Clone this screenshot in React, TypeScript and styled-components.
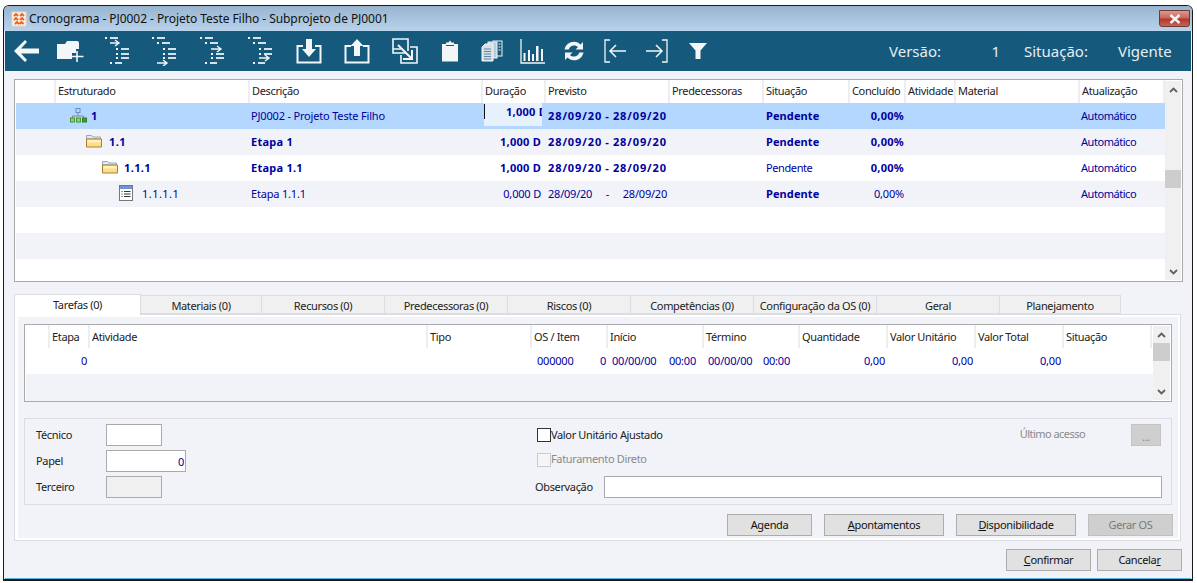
import React from "react";
import styled, { createGlobalStyle } from "styled-components";

const Global = createGlobalStyle`
  html, body { margin: 0; padding: 0; background: #fff; width: 1197px; height: 583px; overflow: hidden; }
  body { font-family: "Noto Sans", "Liberation Sans", sans-serif; font-size: 11px; color: #111; letter-spacing: -0.35px; }
  * { box-sizing: border-box; }
`;

const Win = styled.div`
  width: 1190px; height: 576px; margin: 5px 0 0 3px;
  border: 1px solid #1a1a1a; border-radius: 6px 6px 0 0;
  background: #f1f3f8; display: flex; flex-direction: column; overflow: hidden;
  border-bottom-width: 2px;
`;
const TitleBar = styled.div`
  height: 25px; flex: none; display: flex; align-items: center; padding: 0 2px 0 7px; gap: 2px;
  background: linear-gradient(#98b4cf, #b9d3ec);
`;
const TitleText = styled.span` font-size: 12px; color: #111; flex: 1; letter-spacing: -0.06px; `;
const CloseBtn = styled.div`
  width: 31px; height: 17px; border: 1px solid #6f3a36; border-radius: 0 0 3px 3px;
  background: linear-gradient(#d99a90 0, #c9685c 45%, #b3382a 55%, #c4645a 100%);
  display: flex; align-items: center; justify-content: center;
`;
const Toolbar = styled.div`
  height: 40px; flex: none; margin: 0 1px; background: #155a7c; display: flex; align-items: center; color: #e6eef3;
`;
const ToolBtn = styled.div<{ $w: number }>`
  width: ${(p) => p.$w}px; flex: none; height: 100%; display: flex; align-items: center; justify-content: center;
`;
const InfoArea = styled.div`
  margin-left: auto; display: flex; font-size: 15px; padding: 0 20px 1px 0; align-items: center; letter-spacing: 0;
`;
const Info = styled.span<{ $w: number; $right?: boolean; $pl?: number }>`
  width: ${(p) => p.$w}px; text-align: ${(p) => (p.$right ? "right" : "left")}; white-space: nowrap;
  padding-left: ${(p) => p.$pl ?? 0}px;
`;
const Content = styled.div`
  flex: 1; margin: 0 1px; padding: 8px 9px 0 9px; display: flex; flex-direction: column; border-bottom: 1px solid #5ab6dc;
`;
const GridFrame = styled.div`
  width: 1169px; height: 203px; flex: none; border: 1px solid #aaa; background: #fff; display: flex;
`;
const GridBody = styled.div` flex: 1; min-width: 0; padding-left: 1px; display: flex; flex-direction: column; overflow: hidden; `;
const mainCols = "40px 194px 233px 63px 124px 94px 86px 56px 50px 124px 85px";
const subCols = "24px 40px 338px 104px 76px 96px 96px 88px 88px 88px 88px";
const Row = styled.div<{ $cols: string; $bg?: string; $h: number }>`
  display: grid; grid-template-columns: ${(p) => p.$cols}; height: ${(p) => p.$h}px; flex: none;
  background: ${(p) => p.$bg || "#fff"}; align-items: center; padding-bottom: 2px;
`;
const HeadRow = styled(Row)` padding-bottom: 0; `;
const Head = styled.div<{ $top: number }>`
  height: 100%; border-right: 2px solid #eceef2; padding: ${(p) => p.$top}px 0 0 2px; line-height: 15px; white-space: nowrap; overflow: hidden; color: #222;
`;
const ink = "#00009e";
const Cell = styled.div<{ $bold?: boolean; $right?: boolean; $pad?: number; $ls?: number }>`
  color: ${ink}; font-weight: ${(p) => (p.$bold ? 700 : 400)}; white-space: nowrap;
  letter-spacing: ${(p) => p.$ls ?? (p.$bold ? 0.25 : -0.18)}px;
  text-align: ${(p) => (p.$right ? "right" : "left")};
  padding: ${(p) => (p.$right ? `0 ${p.$pad ?? 4}px 0 0` : `0 0 0 ${p.$pad ?? 2}px`)};
`;
const TreeCell = styled.div<{ $indent: number; $gap: number; $bold?: boolean }>`
  display: flex; align-items: center; padding-left: ${(p) => p.$indent}px; gap: ${(p) => p.$gap}px;
  color: ${ink}; font-weight: ${(p) => (p.$bold ? 700 : 400)}; letter-spacing: ${(p) => (p.$bold ? 0.4 : 0.45)}px;
`;
const EditCell = styled.div`
  position: relative; height: 23px; margin: -1px 4px 0 1px; background: #e6f1fd; color: ${ink}; font-weight: 700;
  overflow: hidden; text-align: right; line-height: 17px; letter-spacing: 0.25px;
  &::before { content: ""; position: absolute; left: 0; top: 1px; width: 1px; height: 15px; background: #111; }
`;
const EditText = styled.span` display: inline-block; margin-right: -5px; `;
const DateCell = styled.div<{ $bold?: boolean }>`
  display: flex; justify-content: space-between; padding: 0 3px 0 2px; color: ${ink};
  font-weight: ${(p) => (p.$bold ? 700 : 400)}; white-space: nowrap;
  letter-spacing: ${(p) => (p.$bold ? 0.9 : -0.22)}px;
`;
const Scroll = styled.div<{ $w: number; $top: number; $thumb: number }>`
  width: ${(p) => p.$w}px; flex: none; background: #f0f0f0; margin: 1px 1px 1px 0; position: relative; display: flex; flex-direction: column; align-items: center; justify-content: space-between; padding: 6px 0 5px;
  &::after { content: ""; position: absolute; left: 0; right: 0; top: ${(p) => p.$top}px; height: ${(p) => p.$thumb}px; background: #cdcdcd; }
`;
const Tabs = styled.div` display: flex; margin-top: 12px; height: 20px; flex: none; align-items: flex-end; `;
const Tab = styled.div<{ $w: number; $on?: boolean }>`
  width: ${(p) => p.$w}px; flex: none; height: ${(p) => (p.$on ? 21 : 19)}px; text-align: center;
  background: ${(p) => (p.$on ? "#fff" : "#f0f0f0")}; color: #222;
  border: 1px solid #dcdde0; border-bottom: ${(p) => (p.$on ? "0" : "1px solid #dcdde0")}; border-left-width: ${(p) => (p.$on ? 1 : 0)}px;
  line-height: ${(p) => (p.$on ? 19 : 20)}px; position: relative; z-index: ${(p) => (p.$on ? 1 : 0)}; margin-bottom: ${(p) => (p.$on ? -1 : 0)}px;
`;
const TabPanel = styled.div`
  width: 1167px; height: 227px; flex: none; border: 1px solid #dcdde0; box-shadow: inset 0 0 0 2px #fff, inset 2px 0 0 1px #fff, inset -2px -1px 0 0 #fff;
  padding: 9px 9px 0 9px; display: flex; flex-direction: column;
`;
const SubFrame = styled.div`
  width: 1148px; height: 78px; flex: none; border: 1px solid #aaa; background: #fff; display: flex;
`;
const SplitCell = styled.div<{ $l: number; $r: number }>`
  display: flex; justify-content: space-between; color: ${ink}; white-space: nowrap; letter-spacing: -0.2px;
  padding: 0 ${(p) => p.$r}px 0 ${(p) => p.$l}px;
`;
const Group = styled.div`
  width: 1148px; height: 87px; margin-top: 16px; border: 1px solid #dcdde0; flex: none;
  display: grid; grid-template-columns: 501px minmax(0, 1fr); padding: 5px 9px 5px 11px;
`;
const FieldStack = styled.div` display: grid; grid-template-rows: 22px 22px 22px; row-gap: 4px; `;
const FieldRow = styled.div` display: grid; grid-template-columns: 70px auto; align-items: center; `;
const Label = styled.span` color: #222; padding-bottom: 2px; `;
const Input = styled.div<{ $w: number; $off?: boolean }>`
  width: ${(p) => p.$w}px; height: 22px; border: 1px solid #aaa; background: ${(p) => (p.$off ? "#f0f0f0" : "#fff")};
  text-align: right; color: ${ink}; padding-right: 1px; line-height: 22px;
`;
const CheckRow = styled.div<{ $up?: number }>` display: flex; align-items: center; margin-top: ${(p) => -(p.$up ?? 0)}px; `;
const CheckLabel = styled.label<{ $off?: boolean }>`
  display: flex; align-items: center; color: ${(p) => (p.$off ? "#8a8a8a" : "#222")};
`;
const CheckText = styled.span` padding-bottom: 2px; `;
const Box = styled.span<{ $off?: boolean }>`
  width: 14px; height: 14px; border: 1px solid ${(p) => (p.$off ? "#ccc" : "#333")}; background: ${(p) => (p.$off ? "#f5f5f5" : "#fff")}; flex: none;
`;
const Last = styled.span` margin-left: auto; color: #8a8a8a; margin-right: 46px; padding-bottom: 3px; letter-spacing: -0.55px; `;
const Dots = styled.div`
  width: 30px; height: 22px; background: #cfcfcf; border: 1px solid #c4c4c4; color: #888; text-align: center; line-height: 24px; margin-right: 1px; margin-top: -1px;
`;
const ObsRow = styled.div` display: flex; align-items: center; gap: 11px; margin-left: -2px; `;
const ObsInput = styled.div` width: 558px; height: 22px; border: 1px solid #aaa; background: #fff; `;
const ButtonsRow = styled.div<{ $mt: number; $gap: number; $mr?: number }>`
  display: flex; justify-content: flex-end; gap: ${(p) => p.$gap}px; margin-top: ${(p) => p.$mt}px; margin-right: ${(p) => p.$mr ?? 0}px; flex: none;
`;
const Btn = styled.div<{ $w: number; $off?: boolean }>`
  width: ${(p) => p.$w}px; height: 22px; text-align: center; line-height: 20px;
  background: ${(p) => (p.$off ? "#cfcfcf" : "#e1e1e1")}; border: 1px solid ${(p) => (p.$off ? "#bfbfbf" : "#adadad")};
  color: ${(p) => (p.$off ? "#7a7a7a" : "#111")};
`;

const W = "#f2f6f8";
const Dash = "#d5e2ea";

const AppLogo = () => (
  <svg width="16" height="16" viewBox="0 0 16 16">
    <rect x="1" y="1" width="14" height="14" fill="#f7efe2" stroke="#e8d9c5" />
    <path d="M3 5l2-2 2 2M9 5l2-2 2 2M3 9l2-2 2 2M9 9l2-2 2 2M4 13l2-2 2 2M8.500 13l2-2 2 2" fill="none" stroke="#e8601a" strokeWidth="1.800" />
  </svg>
);
const CloseX = () => (
  <svg width="12" height="10" viewBox="0 0 12 10">
    <path d="M1.500 1l9 8M10.500 1l-9 8" stroke="#f5f5f5" strokeWidth="2.400" />
  </svg>
);
const BackIcon = () => (
  <svg width="27" height="24" viewBox="0 0 27 24">
    <path d="M12 1L1 12l11 11 2-2-6-6.500h18v-5H8L14 3z" fill={W} />
  </svg>
);
const FolderPlus = () => (
  <svg width="28" height="24" viewBox="0 0 28 24">
    <path d="M0 5h8l2-3h10a2 2 0 0 1 2 2v6h-3v4h-4v6H0z" fill={W} />
    <path d="M20 12v11M14.500 17.500h12" stroke={W} strokeWidth="1.600" />
  </svg>
);
const Step = ({ x, y, w }: { x: number; y: number; w: number }) => (
  <>
    <rect x={x} y={y} width="2" height="2" fill={W} />
    <rect x={x + 5} y={y} width={w} height="2" fill={Dash} />
  </>
);
const Arrow = ({ x, y, len }: { x: number; y: number; len: number }) => (
  <path d={`M${x} ${y}h${len}M${x + len - 4} ${y - 3}l4 3-4 3`} stroke={W} strokeWidth="1.400" fill="none" />
);
const TreeIcon = ({ arrow }: { arrow: 0 | 1 | 2 | 3 }) => (
  <svg width="26" height="30" viewBox="0 0 26 30">
    <Step x={0} y={1} w={8} />
    {arrow === 0 ? <Arrow x={5} y={7} len={9} /> : <Step x={5} y={6} w={8} />}
    {arrow === 2 ? <Arrow x={11} y={13} len={10} /> : <Step x={11} y={12} w={8} />}
    <Step x={11} y={17} w={8} />
    {arrow === 3 ? <Arrow x={11} y={22} len={10} /> : <Step x={11} y={21} w={8} />}
    {arrow === 1 ? <Arrow x={5} y={27} len={10} /> : <Step x={5} y={26} w={7} />}
  </svg>
);
const Tray = ({ up }: { up?: boolean }) => (
  <svg width="26" height="26" viewBox="0 0 26 26">
    <path d="M7 8H1.500v16.500h23V8H19" fill="none" stroke={W} strokeWidth="2" />
    {up ? <path d="M13 1l6.500 7H16v10h-6V8H6.500z" fill={W} /> : <path d="M10 1h6v10h4l-7 8-7-8h4z" fill={W} />}
  </svg>
);
const BoxArrow = () => (
  <svg width="26" height="26" viewBox="0 0 26 26">
    <path d="M14 15H1V1h15v12" fill="none" stroke={W} strokeWidth="1.600" />
    <path d="M9 11H1M18 9h7v16H9v-8" fill="none" stroke={W} strokeWidth="1.600" />
    <path d="M6 7l13 13M20 12v9h-9" fill="none" stroke={W} strokeWidth="2" />
  </svg>
);
const Clipboard = () => (
  <svg width="18" height="22" viewBox="0 0 18 22">
    <path d="M1 4h4V2.500h2.500L9 .5l1.500 2H13V4h4v17.500H1z" fill={W} />
    <path d="M5 5.500h8" stroke="#155a7c" strokeWidth="1" />
  </svg>
);
const Docs = () => (
  <svg width="22" height="22" viewBox="0 0 22 22">
    <rect x="12" y="1" width="9" height="15" fill="none" stroke={W} />
    <rect x="7" y="2" width="9" height="16" fill="#b9cbd6" stroke={W} />
    <path d="M1 7l3-3h8v17H1z" fill="#d6e0e6" stroke={W} />
    <path d="M3 9h7M3 11.500h7M3 14h7M3 16.500h7M3 19h7" stroke="#5d8aa2" />
    <path d="M17.500 4h2M17.500 7h2M17.500 10h2" stroke={W} />
  </svg>
);
const Chart = () => (
  <svg width="25" height="25" viewBox="0 0 25 25">
    <path d="M1 0v24h24" fill="none" stroke={W} strokeWidth="1.300" />
    <path d="M3.500 22V14h2v8zM8 22V11h2v11zM12 22V15h2v7zM16 22V7h2.500v15zM21 22V10h2v12z" fill={W} />
  </svg>
);
const Refresh = () => (
  <svg width="22" height="20" viewBox="0 0 22 20">
    <path d="M1.500 8.500C2.500 3.500 6.500.7 11 .7c3 0 5 1.300 6.500 2.800L20 1v7.500h-7.500l2.500-2.500c-1-1-2.300-1.600-4-1.600-2.400 0-4.400 1.500-5.300 4.100z" fill={W} />
    <path d="M20.500 11.500c-1 5-5 7.800-9.500 7.800-3 0-5-1.300-6.500-2.800L2 19v-7.500h7.500L7 14c1 1 2.300 1.600 4 1.600 2.400 0 4.400-1.500 5.300-4.100z" fill={W} />
  </svg>
);
const BracketLeft = () => (
  <svg width="23" height="24" viewBox="0 0 23 24">
    <path d="M6 1H1v22h5" fill="none" stroke={W} strokeWidth="1.300" />
    <path d="M22 12H6M12 6l-6 6 6 6" fill="none" stroke={W} strokeWidth="1.500" />
  </svg>
);
const BracketRight = () => (
  <svg width="23" height="24" viewBox="0 0 23 24">
    <path d="M17 1h5v22h-5" fill="none" stroke={W} strokeWidth="1.300" />
    <path d="M1 12h16M11 6l6 6-6 6" fill="none" stroke={W} strokeWidth="1.500" />
  </svg>
);
const Funnel = () => (
  <svg width="18" height="16" viewBox="0 0 18 16">
    <path d="M0 0h18l-6.500 7.500V16h-5V7.500z" fill={W} />
  </svg>
);
const Net = () => (
  <svg width="17" height="15" viewBox="0 0 17 15">
    <rect x="6" y="0.500" width="4" height="4" fill="#bcd7f5" stroke="#5d8fd1" />
    <path d="M8 5v3M2.500 10V8h11v2" fill="none" stroke="#888" />
    <rect x="0.500" y="10" width="4" height="4" fill="#8fcf7c" stroke="#3f9a35" />
    <rect x="6.500" y="10" width="4" height="4" fill="#8fcf7c" stroke="#3f9a35" />
    <rect x="12.500" y="10" width="4" height="4" fill="#3f9a35" stroke="#2f7f27" />
  </svg>
);
const Folder = () => (
  <svg width="16" height="14" viewBox="0 0 16 14">
    <path d="M.5 13V1.500h5l1.500 1.500h7.500V5H.5" fill="#dfeaf5" stroke="#9aa7b5" />
    <path d="M.5 13V5h15v8z" fill="#fddc8a" stroke="#a8842f" />
    <rect x="1.500" y="6" width="13" height="2.500" fill="#fff0c2" />
  </svg>
);
const ListIcon = () => (
  <svg width="14" height="16" viewBox="0 0 14 16">
    <rect x=".5" y=".5" width="13" height="15" fill="#fff" stroke="#777" />
    <rect x="1" y="1" width="12" height="3" fill="#6f93d6" />
    <path d="M2.500 6.500h1M2.500 9h1M2.500 11.500h1M5 6.500h6.500M5 9h6.500M5 11.500h6.500" stroke="#333" strokeWidth="1.200" />
  </svg>
);
const Up = () => (
  <svg width="9" height="6" viewBox="0 0 9 6">
    <path d="M1 5l3.500-3.500L8 5" fill="none" stroke="#606060" strokeWidth="1.800" />
  </svg>
);
const Down = () => (
  <svg width="9" height="6" viewBox="0 0 9 6">
    <path d="M1 1l3.500 3.500L8 1" fill="none" stroke="#606060" strokeWidth="1.800" />
  </svg>
);

const mainHeads = ["", "Estruturado", "Descrição", "Duração", "Previsto", "Predecessoras", "Situação", "Concluído", "Atividade", "Material", "Atualização"];
const subHeads = ["", "Etapa", "Atividade", "Tipo", "OS / Item", "Início", "Término", "Quantidade", "Valor Unitário", "Valor Total", "Situação"];
const tabs: [string, number][] = [
  ["Tarefas (0)", 127], ["Materiais (0)", 121], ["Recursos (0)", 123], ["Predecessoras (0)", 123], ["Riscos (0)", 123],
  ["Competências (0)", 123], ["Configuração da OS (0)", 123], ["Geral", 123], ["Planejamento", 121],
];
type RowData = {
  bg: string; indent: number; gap: number; icon: React.ReactNode; code: string; codeBold: boolean; desc: string; descBold: boolean;
  dur: string; durBold: boolean; edit?: boolean; dateBold: boolean; sit: string; sitBold: boolean; pct: boolean;
};
const rows: RowData[] = [
  { bg: "#b3d7ff", indent: 14, gap: 4, icon: <Net />, code: "1", codeBold: true, desc: "PJ0002 - Projeto Teste Filho", descBold: false, dur: "1,000 D", durBold: true, edit: true, dateBold: true, sit: "Pendente", sitBold: true, pct: true },
  { bg: "#f1f3f8", indent: 30, gap: 7, icon: <Folder />, code: "1.1", codeBold: true, desc: "Etapa 1", descBold: true, dur: "1,000 D", durBold: true, dateBold: true, sit: "Pendente", sitBold: true, pct: true },
  { bg: "#fff", indent: 46, gap: 6, icon: <Folder />, code: "1.1.1", codeBold: true, desc: "Etapa 1.1", descBold: true, dur: "1,000 D", durBold: true, dateBold: true, sit: "Pendente", sitBold: false, pct: true },
  { bg: "#f1f3f8", indent: 63, gap: 9, icon: <ListIcon />, code: "1.1.1.1", codeBold: false, desc: "Etapa 1.1.1", descBold: false, dur: "0,000 D", durBold: false, dateBold: false, sit: "Pendente", sitBold: true, pct: false },
];

export default function App() {
  return (
    <>
      <Global />
      <Win>
        <TitleBar>
          <AppLogo />
          <TitleText>Cronograma - PJ0002 - Projeto Teste Filho - Subprojeto de PJ0001</TitleText>
          <CloseBtn><CloseX /></CloseBtn>
        </TitleBar>
        <Toolbar>
          <ToolBtn $w={43}><BackIcon /></ToolBtn>
          <ToolBtn $w={46}><FolderPlus /></ToolBtn>
          <ToolBtn $w={47}><TreeIcon arrow={0} /></ToolBtn>
          <ToolBtn $w={48}><TreeIcon arrow={1} /></ToolBtn>
          <ToolBtn $w={48}><TreeIcon arrow={2} /></ToolBtn>
          <ToolBtn $w={48}><TreeIcon arrow={3} /></ToolBtn>
          <ToolBtn $w={48}><Tray /></ToolBtn>
          <ToolBtn $w={48}><Tray up /></ToolBtn>
          <ToolBtn $w={48}><BoxArrow /></ToolBtn>
          <ToolBtn $w={42}><Clipboard /></ToolBtn>
          <ToolBtn $w={41}><Docs /></ToolBtn>
          <ToolBtn $w={41}><Chart /></ToolBtn>
          <ToolBtn $w={42}><Refresh /></ToolBtn>
          <ToolBtn $w={41}><BracketLeft /></ToolBtn>
          <ToolBtn $w={41}><BracketRight /></ToolBtn>
          <ToolBtn $w={41}><Funnel /></ToolBtn>
          <InfoArea>
            <Info $w={85}>Versão:</Info>
            <Info $w={26} $right>1</Info>
            <Info $w={118} $pl={24}>Situação:</Info>
            <Info $w={53}>Vigente</Info>
          </InfoArea>
        </Toolbar>
        <Content>
          <GridFrame>
            <GridBody>
              <HeadRow $cols={mainCols} $h={23}>
                {mainHeads.map((h, i) => <Head key={i} $top={3}>{h}</Head>)}
              </HeadRow>
              {rows.map((r) => (
                <Row key={r.code} $cols={mainCols} $h={26} $bg={r.bg}>
                  <span />
                  <TreeCell $indent={r.indent} $gap={r.gap} $bold={r.codeBold}>{r.icon}<span>{r.code}</span></TreeCell>
                  <Cell $bold={r.descBold} $pad={1}>{r.desc}</Cell>
                  {r.edit ? <EditCell><EditText>{r.dur}</EditText></EditCell> : <Cell $right $pad={5} $bold={r.durBold}>{r.dur}</Cell>}
                  <DateCell $bold={r.dateBold}><span>28/09/20</span><span>-</span><span>28/09/20</span></DateCell>
                  <span />
                  <Cell $bold={r.sitBold} $ls={r.sitBold ? 0.1 : -0.4}>{r.sit}</Cell>
                  <Cell $right $pad={2} $bold={r.pct}>0,00%</Cell>
                  <span />
                  <span />
                  <Cell $ls={-0.45} $pad={1}>Automático</Cell>
                </Row>
              ))}
              <Row $cols={mainCols} $h={26} />
              <Row $cols={mainCols} $h={26} $bg="#f1f3f8" />
              <Row $cols={mainCols} $h={22} />
            </GridBody>
            <Scroll $w={16} $top={89} $thumb={18}><Up /><Down /></Scroll>
          </GridFrame>
          <Tabs>
            {tabs.map(([t, w], i) => <Tab key={t} $w={w} $on={i === 0}>{t}</Tab>)}
          </Tabs>
          <TabPanel>
            <SubFrame>
              <GridBody>
                <HeadRow $cols={subCols} $h={23}>
                  {subHeads.map((h, i) => <Head key={i} $top={4}>{h}</Head>)}
                </HeadRow>
                <Row $cols={subCols} $h={26}>
                  <span />
                  <Cell $right $pad={3}>0</Cell>
                  <span />
                  <span />
                  <SplitCell $l={5} $r={2}><span>000000</span><span>0</span></SplitCell>
                  <SplitCell $l={4} $r={8}><span>00/00/00</span><span>00:00</span></SplitCell>
                  <SplitCell $l={4} $r={10}><span>00/00/00</span><span>00:00</span></SplitCell>
                  <Cell $right $pad={3}>0,00</Cell>
                  <Cell $right $pad={3}>0,00</Cell>
                  <Cell $right $pad={3}>0,00</Cell>
                  <span />
                </Row>
                <Row $cols={subCols} $h={27} $bg="#f1f3f8" />
              </GridBody>
              <Scroll $w={17} $top={17} $thumb={18}><Up /><Down /></Scroll>
            </SubFrame>
            <Group>
              <FieldStack>
                <FieldRow><Label>Técnico</Label><Input $w={56} /></FieldRow>
                <FieldRow><Label>Papel</Label><Input $w={80}>0</Input></FieldRow>
                <FieldRow><Label>Terceiro</Label><Input $w={56} $off /></FieldRow>
              </FieldStack>
              <FieldStack>
                <CheckRow>
                  <CheckLabel><Box /><CheckText>Valor Unitário Ajustado</CheckText></CheckLabel>
                  <Last>Último acesso</Last>
                  <Dots>...</Dots>
                </CheckRow>
                <CheckRow $up={3}><CheckLabel $off><Box $off /><CheckText>Faturamento Direto</CheckText></CheckLabel></CheckRow>
                <ObsRow><Label>Observação</Label><ObsInput /></ObsRow>
              </FieldStack>
            </Group>
            <ButtonsRow $mt={9} $gap={12} $mr={-2}>
              <Btn $w={85}>A<u>g</u>enda</Btn>
              <Btn $w={120}><u>A</u>pontamentos</Btn>
              <Btn $w={120}><u>D</u>isponibilidade</Btn>
              <Btn $w={85} $off>Gerar OS</Btn>
            </ButtonsRow>
          </TabPanel>
          <ButtonsRow $mt={8} $gap={6}>
            <Btn $w={85}><u>C</u>onfirmar</Btn>
            <Btn $w={85}>Cancela<u>r</u></Btn>
          </ButtonsRow>
        </Content>
      </Win>
    </>
  );
}
